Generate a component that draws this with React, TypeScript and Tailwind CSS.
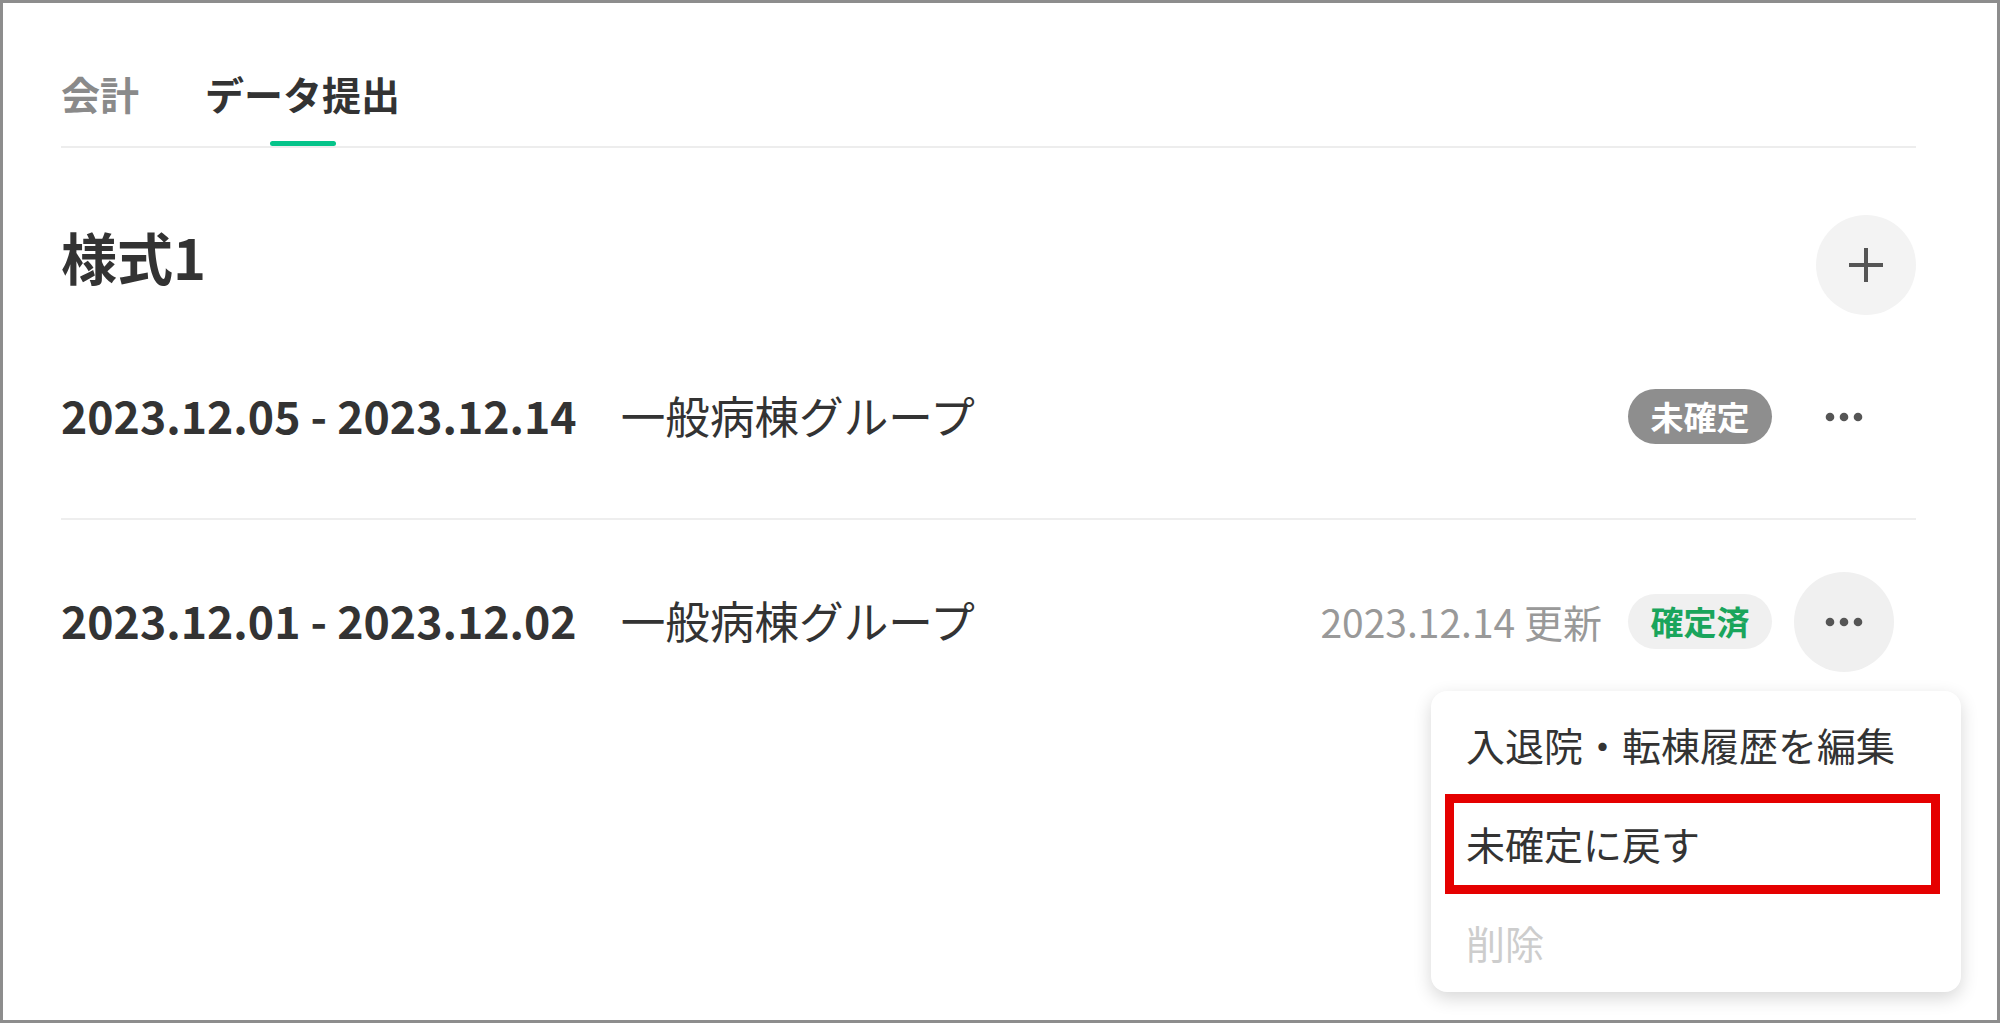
import React from "react";

type Row = {
  range: string;
  ward: string;
  updated?: string;
  status: "pending" | "done";
  open?: boolean;
};

const rows: Row[] = [
  { range: "2023.12.05 - 2023.12.14", ward: "一般病棟グループ", status: "pending" },
  { range: "2023.12.01 - 2023.12.02", ward: "一般病棟グループ", updated: "2023.12.14 更新", status: "done", open: true },
];

const font = { fontFamily: '"Noto Sans CJK JP", "Noto Sans", sans-serif' };

function Dots() {
  return (
    <svg width="38" height="10" viewBox="0 0 38 10" fill="#555">
      <circle cx="5" cy="5" r="4.3" />
      <circle cx="19" cy="5" r="4.3" />
      <circle cx="33" cy="5" r="4.3" />
    </svg>
  );
}

function Badge({ status }: { status: Row["status"] }) {
  if (status === "pending") {
    return (
      <span className="flex h-[55px] w-[144px] items-center justify-center rounded-full bg-[#8e8e8e] text-[33px] font-bold text-white">
        未確定
      </span>
    );
  }
  return (
    <span className="flex h-[55px] w-[144px] items-center justify-center rounded-full bg-[#f0f0f0] text-[33px] font-bold text-[#1aa55c]">
      確定済
    </span>
  );
}

export default function App() {
  return (
    <div
      className="relative h-[1023px] w-[2000px] overflow-hidden border-[3px] border-[#8d8d8d] bg-white text-[#333]"
      style={font}
    >
      <div className="pl-[58px] pr-[81px]">
        {/* tabs */}
        <div className="mt-[45px] flex gap-[66px] border-b-2 border-[#ededed]">
          <div className="flex h-[98px] items-center pb-[8px] text-[39px] font-bold text-[#8a8a8a]">会計</div>
          <div className="relative flex h-[98px] items-center pb-[8px] text-[39px] font-bold text-[#333]">
            データ提出
            <span className="absolute bottom-0 left-1/2 h-[5px] w-[66px] -translate-x-1/2 rounded-sm bg-[#05c48a]" />
          </div>
        </div>

        {/* heading */}
        <div className="mt-[67px] flex h-[100px] items-center justify-between">
          <h1 className="mb-[18px] text-[56px] font-bold leading-none">様式1</h1>
          <button className="flex h-[100px] w-[100px] items-center justify-center rounded-full bg-[#f3f3f3]">
            <svg width="34" height="34" viewBox="0 0 34 34" stroke="#555" strokeWidth="4">
              <path d="M17 0v34M0 17h34" />
            </svg>
          </button>
        </div>

        {/* rows */}
        {rows.map((r, i) => (
          <div
            key={i}
            className={`flex h-[203px] items-center ${i > 0 ? "h-[205px] border-t-2 border-[#eeeeee]" : ""}`}
          >
            <span className="mb-[3px] text-[44.6px] font-bold">{r.range}</span>
            <span className="mb-[3px] ml-[44px] text-[44.6px]">{r.ward}</span>
            <div className="ml-auto flex items-center">
              {r.updated && <span className="mr-[26px] text-[39px] text-[#999]">{r.updated}</span>}
              <Badge status={r.status} />
              <button
                className={`ml-[22px] mr-[22px] flex h-[100px] w-[100px] items-center justify-center rounded-full ${
                  r.open ? "bg-[#f0f0f0]" : ""
                }`}
              >
                <Dots />
              </button>
            </div>
          </div>
        ))}
      </div>

      {/* dropdown menu */}
      <div className="absolute left-[1428px] top-[688px] w-[530px] rounded-[16px] bg-white pt-[4px] shadow-[0_6px_18px_rgba(0,0,0,0.16)]">
        <div className="flex h-[99px] items-center pl-[35px] text-[39px]">入退院・転棟履歴を編集</div>
        <div className="flex h-[99px] items-center pl-[35px] text-[39px]">未確定に戻す</div>
        <div className="flex h-[99px] items-center pl-[35px] text-[39px] text-[#cdcdcd]">削除</div>
      </div>

      {/* highlight annotation */}
      <div className="absolute left-[1442px] top-[791px] h-[100px] w-[495px] border-[9px] border-[#e50000]" />
    </div>
  );
}
